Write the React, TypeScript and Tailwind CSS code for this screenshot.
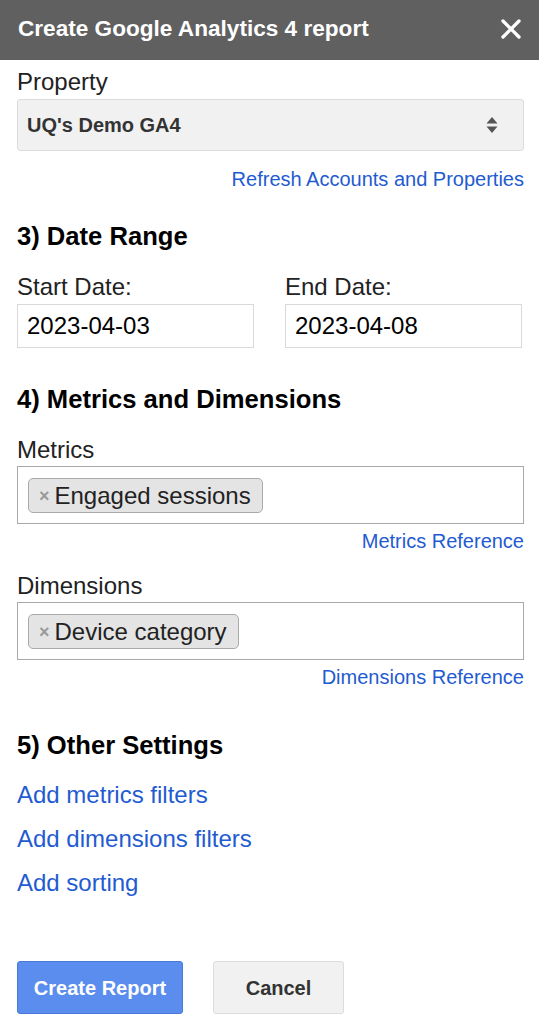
import { X } from "lucide-react";

const font = { fontFamily: '"Liberation Sans", Arial, sans-serif' };

function Chip({ label }: { label: string }) {
  return (
    <span className="inline-flex h-[35px] items-center gap-[5px] rounded-[5px] border border-[#aaaaaa] bg-[#e4e4e4] pl-[10px] pr-[11px] text-[24px] leading-none text-[#222]">
      <span className="text-[18px] font-bold text-[#999]">×</span>
      {label}
    </span>
  );
}

function TagBox({ label }: { label: string }) {
  return (
    <div className="mt-[2px] h-[58px] border border-[#a9a9a9] bg-white pl-[10px] pt-[11px]">
      <Chip label={label} />
    </div>
  );
}

export default function App() {
  return (
    <div className="min-h-screen w-[539px] bg-white" style={font}>
      <div className="flex h-[60px] items-center justify-between bg-[#606060] pb-[3px] pl-[18px] pr-[12px]">
        <h1 className="text-[22.6px] font-bold text-white">Create Google Analytics 4 report</h1>
        <X className="h-[32px] w-[32px] text-white" strokeWidth={2.5} />
      </div>

      <div className="pl-[17px] pr-[15px]">
        <p className="mt-[8px] text-[24px] leading-[28px] text-[#222]">Property</p>
        <div className="mt-[3px] flex h-[52px] items-center justify-between rounded-[3px] border border-[#dcdcdc] bg-[#f1f1f1] pl-[9px] pr-[25px]">
          <span className="text-[20px] font-bold text-[#333]">UQ's Demo GA4</span>
          <svg width="12" height="18" viewBox="0 0 12 18" className="text-[#555]">
            <path d="M6 1 L11.5 7.5 H0.5 Z" fill="currentColor" />
            <path d="M6 17 L11.5 10.5 H0.5 Z" fill="currentColor" />
          </svg>
        </div>
        <div className="mt-[16px] text-right text-[20px] leading-[24px] text-[#1f5bd1]">
          <a>Refresh Accounts and Properties</a>
        </div>

        <h2 className="mt-[31px] text-[25.6px] font-bold leading-[28px] text-black">3) Date Range</h2>
        <div className="mt-[23px] flex gap-[31px]">
          <div className="w-[237px]">
            <p className="text-[24px] leading-[28px] text-[#222]">Start Date:</p>
            <div className="mt-[3px] flex h-[44px] items-center border border-[#d9d9d9] px-[9px] text-[24px] text-black">
              2023-04-03
            </div>
          </div>
          <div className="w-[237px]">
            <p className="text-[24px] leading-[28px] text-[#222]">End Date:</p>
            <div className="mt-[3px] flex h-[44px] items-center border border-[#d9d9d9] px-[9px] text-[24px] text-black">
              2023-04-08
            </div>
          </div>
        </div>

        <h2 className="mt-[37px] text-[25.6px] font-bold leading-[28px] text-black">4) Metrics and Dimensions</h2>
        <p className="mt-[23px] text-[24px] leading-[28px] text-[#222]">Metrics</p>
        <TagBox label="Engaged sessions" />
        <div className="mt-[5px] text-right text-[20px] leading-[24px] text-[#1f5bd1]">
          <a>Metrics Reference</a>
        </div>
        <p className="mt-[19px] text-[24px] leading-[28px] text-[#222]">Dimensions</p>
        <TagBox label="Device category" />
        <div className="mt-[5px] text-right text-[20px] leading-[24px] text-[#1f5bd1]">
          <a>Dimensions Reference</a>
        </div>

        <h2 className="mt-[42px] text-[25.6px] font-bold leading-[28px] text-black">5) Other Settings</h2>
        <div className="mt-[22px] flex flex-col gap-[16px] text-[24px] leading-[28px] text-[#1f5bd1]">
          <a>Add metrics filters</a>
          <a>Add dimensions filters</a>
          <a>Add sorting</a>
        </div>

        <div className="mt-[64px] flex gap-[30px]">
          <button className="h-[53px] w-[166px] rounded-[3px] border border-[#4a7ad8] bg-[#5a8dee] text-[20px] font-bold text-white">
            Create Report
          </button>
          <button className="h-[53px] w-[131px] rounded-[3px] border border-[#dcdcdc] bg-[#f1f1f1] text-[20px] font-bold text-[#333]">
            Cancel
          </button>
        </div>
      </div>
    </div>
  );
}
